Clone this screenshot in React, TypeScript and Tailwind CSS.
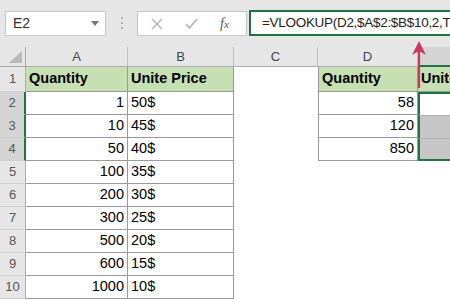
import React from 'react';

const GREEN = 'border-[#217346]';

const rows: [string, string][] = [
  ['1', '50$'],
  ['10', '45$'],
  ['50', '40$'],
  ['100', '35$'],
  ['200', '30$'],
  ['300', '25$'],
  ['500', '20$'],
  ['600', '15$'],
  ['1000', '10$'],
];

const lookups = ['58', '120', '850'];

function ColHead({ label, selected }: { label: string; selected?: boolean }) {
  return (
    <div
      className={`h-[20px] flex items-center justify-center text-[13px] text-[#444] border-r border-[#bdbdbd] ${
        selected ? 'bg-[#d4d4d4] border-b-2 border-b-[#217346]' : 'bg-[#e6e6e6] border-b border-b-[#ababab]'
      }`}
    >
      {label}
    </div>
  );
}

function RowHead({ n, h, selected }: { n: number; h: string; selected?: boolean }) {
  return (
    <div
      className={`${h} flex items-center justify-center text-[13px] text-[#555] border-b border-[#d0d0d0] ${
        selected ? 'bg-[#d4d4d4] border-r-2 border-r-[#217346]' : 'bg-[#e6e6e6] border-r border-r-[#ababab]'
      }`}
    >
      {n}
    </div>
  );
}

export default function App() {
  return (
    <div className="relative w-[450px] h-[300px] overflow-hidden bg-white font-['Liberation_Sans',Arial,sans-serif] text-black">
      {/* formula bar */}
      <div className="h-[47px] bg-[#e6e6e6] flex items-start pt-[10px]">
        <div className="ml-[5px] mt-[1px] w-[101px] h-[25px] bg-white border border-[#c6c6c6] flex items-center justify-between pl-[7px] pr-[6px]">
          <span className="text-[14px] text-[#333]">E2</span>
          <svg width="8" height="5" viewBox="0 0 8 5">
            <path d="M0 0 L8 0 L4 5 Z" fill="#777" />
          </svg>
        </div>
        <div className="w-[31px] h-[26px] flex flex-col items-center justify-center gap-[3px]">
          <span className="w-[2px] h-[2px] bg-[#b0b0b0]" />
          <span className="w-[2px] h-[2px] bg-[#b0b0b0]" />
          <span className="w-[2px] h-[2px] bg-[#b0b0b0]" />
        </div>
        <div className="mt-[1px] w-[110px] h-[25px] bg-white border border-[#c6c6c6] flex items-center">
          <svg className="ml-[13px]" width="12" height="12" viewBox="0 0 12 12">
            <path d="M1 1 L11 11 M11 1 L1 11" stroke="#b4b4b4" strokeWidth="1.4" />
          </svg>
          <svg className="ml-[22px]" width="13" height="11" viewBox="0 0 13 11">
            <path d="M1 6 L4.5 10 L12 1" stroke="#b4b4b4" strokeWidth="1.6" fill="none" />
          </svg>
          <span className="ml-[22px] text-[14px] italic font-['Liberation_Serif',serif] text-[#555]">
            f<span className="text-[11px]">x</span>
          </span>
        </div>
        <div className={`ml-[2px] h-[26px] flex-1 bg-white border-2 ${GREEN} border-r-0 flex items-center pl-[11px] whitespace-nowrap overflow-hidden`}>
          <span className="text-[13.5px] tracking-[-0.3px] text-[#222]">=VLOOKUP(D2,$A$2:$B$10,2,TRUE)</span>
        </div>
      </div>

      {/* sheet */}
      <div className="grid grid-cols-[26px_102px_106px_84px_100px_1fr] text-[14.5px]">
        {/* header row */}
        <div className="h-[20px] bg-[#e6e6e6] border-r border-b border-[#ababab] flex items-end justify-end pr-[3px] pb-[3px]">
          <svg width="13" height="12" viewBox="0 0 13 12">
            <path d="M13 0 L13 12 L0 12 Z" fill="#b9b9b9" />
          </svg>
        </div>
        <ColHead label="A" />
        <ColHead label="B" />
        <ColHead label="C" />
        <ColHead label="D" />
        <ColHead label="E" selected />

        {/* row 1 */}
        <RowHead n={1} h="h-[25px]" />
        <div className="h-[25px] bg-[#c6e0b4] border-r border-b border-[#9a9a9a] flex items-center pl-[3px] font-bold">Quantity</div>
        <div className="h-[25px] bg-[#c6e0b4] border-r border-b border-[#9a9a9a] flex items-center pl-[3px] font-bold">Unite Price</div>
        <div className="h-[25px]" />
        <div className="h-[25px] bg-[#c6e0b4] border-l border-r border-b border-[#9a9a9a] flex items-center pl-[3px] font-bold">Quantity</div>
        <div className="h-[25px] bg-[#c6e0b4] border-b border-[#9a9a9a] flex items-center pl-[3px] font-bold whitespace-nowrap">Unite Price</div>

        {rows.map(([q, p], i) => {
          const r = i + 2;
          const lk = lookups[i];
          return (
            <React.Fragment key={r}>
              <RowHead n={r} h="h-[23px]" selected={r <= 4} />
              <div className="h-[23px] border-r border-b border-[#9a9a9a] flex items-center justify-end pr-[3px]">{q}</div>
              <div className="h-[23px] border-r border-b border-[#9a9a9a] flex items-center pl-[3px]">{p}</div>
              <div className="h-[23px]" />
              {lk ? (
                <div className="h-[23px] border-l border-r border-b border-[#9a9a9a] flex items-center justify-end pr-[3px]">{lk}</div>
              ) : (
                <div className="h-[23px]" />
              )}
              {lk ? (
                <div
                  className={`h-[23px] border-l-2 ${GREEN} ${r === 2 ? 'border-t-2 bg-white' : 'bg-[#c6c6c6] border-t border-t-[#b0b0b0]'} ${
                    r === 4 ? 'border-b-2' : ''
                  }`}
                />
              ) : (
                <div className="h-[23px]" />
              )}
            </React.Fragment>
          );
        })}
      </div>

      {/* arrow pointing at the formula */}
      <svg className="absolute left-[411px] top-[40px]" width="16" height="50" viewBox="0 0 16 50">
        <path d="M8 8 L8 48" stroke="#c93b5d" strokeWidth="2.2" />
        <path d="M8 1 L15 15 L8 11 L1 15 Z" fill="#c93b5d" />
      </svg>
    </div>
  );
}
